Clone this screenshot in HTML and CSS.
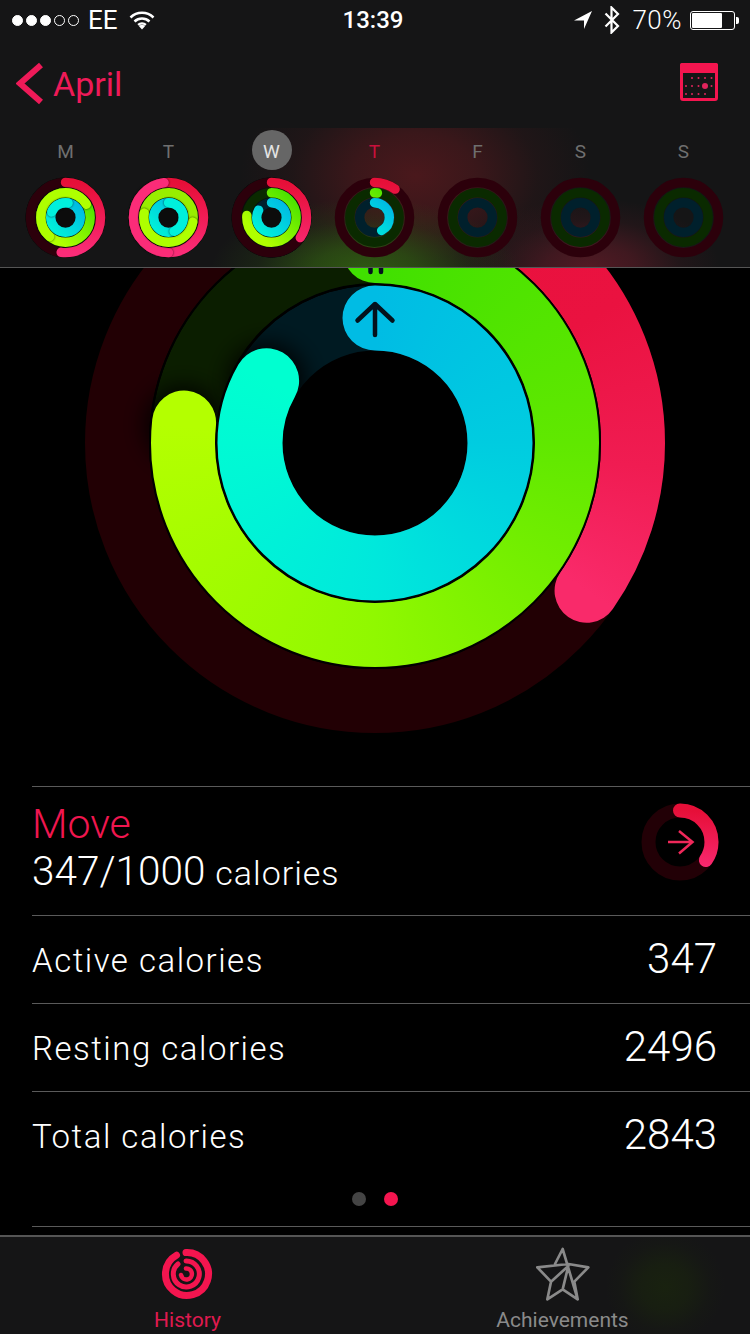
FILE: index.html
```html
<!DOCTYPE html>
<html lang="en">

<head>
    <meta charset="UTF-8">
    <meta name="viewport" content="width=device-width, initial-scale=1.0">
    <title>Activity History</title>
    <link rel="stylesheet" href="styles.css">
</head>

<body>
    <div class="screen">
        <header class="top">
            <div class="status">
                <div class="status-left">
                    <span class="signal">
                        <i class="dot on"></i><i class="dot on"></i><i class="dot on"></i><i class="dot"></i><i class="dot"></i>
                    </span>
                    <span class="carrier">EE</span>
                    <svg class="wifi" width="26" height="20" viewBox="0 0 26 20">
                        <path d="M1.5 7.5a16.5 16.5 0 0 1 23 0" />
                        <path d="M5.5 11.5a11 11 0 0 1 15 0" />
                        <path d="M9.2 15a5.6 5.6 0 0 1 7.6 0" />
                        <path class="wifi-tip" d="M13 19.5l-3-3.3a4.4 4.4 0 0 1 6 0z" />
                    </svg>
                </div>
                <div class="clock">13:39</div>
                <div class="status-right">
                    <svg class="loc" width="18" height="18" viewBox="0 0 18 18">
                        <path d="M0 9.5L18 0l-8 18V9.5z" />
                    </svg>
                    <svg class="bt" width="16" height="28" viewBox="0 0 16 28">
                        <path d="M1.5 7.5L14 20l-6.5 6.5v-25L14 8 1.5 20.5" />
                    </svg>
                    <span class="pct">70%</span>
                    <span class="battery"><span class="battery-fill"></span></span>
                    <span class="battery-nub"></span>
                </div>
            </div>

            <nav class="nav">
                <div class="back">
                    <svg width="28" height="44" viewBox="0 0 28 44">
                        <path d="M25 3L4 21.500 25 40" />
                    </svg>
                    <span>April</span>
                </div>
                <svg class="cal" width="38" height="38" viewBox="0 0 38 38">
                    <rect class="cal-body" x="1.500" y="1.500" width="35" height="35" rx="1.500" />
                    <rect class="cal-band" x="0" y="0" width="38" height="10" rx="2" />
                    <g class="cal-dots">
                        <circle cx="12" cy="15" r="1" /><circle cx="18.500" cy="15" r="1" /><circle cx="25" cy="15" r="1" /><circle cx="31.500" cy="15" r="1" />
                        <circle cx="6" cy="23" r="1" /><circle cx="12" cy="23" r="1" /><circle cx="18.500" cy="23" r="1" /><circle cx="25" cy="23" r="3" /><circle cx="31.500" cy="23" r="1" />
                        <circle cx="6" cy="31" r="1" /><circle cx="12" cy="31" r="1" /><circle cx="18.500" cy="31" r="1" /><circle cx="25" cy="31" r="1" />
                    </g>
                </svg>
            </nav>

            <div class="week">
                <div class="day">
                    <span class="day-name">M</span>
                    <svg class="mini solid" viewBox="-41 -41 82 82">
                        <circle class="track red" r="35.500" />
                        <circle class="track green" r="25" />
                        <circle class="track blue" r="15" />
                        <circle class="arc mini-red" r="35.500" pathLength="100" stroke-dasharray="52 48" stroke-dashoffset="25" />
                        <circle class="arc mini-green" r="25" pathLength="100" stroke-dasharray="100 0" stroke-dashoffset="25" />
                        <circle class="arc lime capped" r="25" pathLength="100" stroke-dasharray="55 45" stroke-dashoffset="64" />
                        <circle class="arc mini-blue" r="15" pathLength="100" stroke-dasharray="100 0" stroke-dashoffset="25" />
                        <circle class="arc mint capped" r="15" pathLength="100" stroke-dasharray="22 78" stroke-dashoffset="44" />
                    </svg>
                </div>
                <div class="day">
                    <span class="day-name">T</span>
                    <svg class="mini solid" viewBox="-41 -41 82 82">
                        <circle class="arc mini-red" r="35.500" pathLength="100" stroke-dasharray="100 0" stroke-dashoffset="25" />
                        <circle class="arc pink capped" r="35.500" pathLength="100" stroke-dasharray="48 52" stroke-dashoffset="-25" />
                        <circle class="arc lime-soft" r="25" pathLength="100" stroke-dasharray="100 0" stroke-dashoffset="25" />
                        <circle class="arc lime capped" r="25" pathLength="100" stroke-dasharray="50 50" stroke-dashoffset="-3" />
                        <circle class="arc mini-blue" r="15" pathLength="100" stroke-dasharray="100 0" stroke-dashoffset="25" />
                        <circle class="arc mint capped" r="15" pathLength="100" stroke-dasharray="44 56" stroke-dashoffset="25" />
                    </svg>
                </div>
                <div class="day">
                    <span class="day-name current">W</span>
                    <svg class="mini solid" viewBox="-41 -41 82 82">
                        <circle class="track red" r="35.500" />
                        <circle class="track green" r="25" />
                        <circle class="track blue" r="15" />
                        <circle class="arc mini-red" r="35.500" pathLength="100" stroke-dasharray="34.700 65.300" stroke-dashoffset="25" />
                        <circle class="arc mini-green" r="25" pathLength="100" stroke-dasharray="76.400 23.600" stroke-dashoffset="25" />
                        <circle class="arc mini-blue" r="15" pathLength="100" stroke-dasharray="83.300 16.700" stroke-dashoffset="25" />
                    </svg>
                </div>
                <div class="day">
                    <span class="day-name today">T</span>
                    <svg class="mini" viewBox="-41 -41 82 82">
                        <circle class="track red" r="35.500" />
                        <circle class="track green" r="25" />
                        <circle class="track blue" r="15" />
                        <circle class="arc mini-red" r="35.500" pathLength="100" stroke-dasharray="10 90" stroke-dashoffset="25" />
                        <circle class="arc mini-green" r="25" pathLength="100" stroke-dasharray="2 98" stroke-dashoffset="25" />
                        <circle class="arc mini-blue" r="15" pathLength="100" stroke-dasharray="42 58" stroke-dashoffset="25" />
                    </svg>
                </div>
                <div class="day">
                    <span class="day-name">F</span>
                    <svg class="mini" viewBox="-41 -41 82 82">
                        <circle class="track red" r="35.500" />
                        <circle class="track green" r="25" />
                        <circle class="track blue" r="15" />
                    </svg>
                </div>
                <div class="day">
                    <span class="day-name">S</span>
                    <svg class="mini" viewBox="-41 -41 82 82">
                        <circle class="track red" r="35.500" />
                        <circle class="track green" r="25" />
                        <circle class="track blue" r="15" />
                    </svg>
                </div>
                <div class="day">
                    <span class="day-name">S</span>
                    <svg class="mini" viewBox="-41 -41 82 82">
                        <circle class="track red" r="35.500" />
                        <circle class="track green" r="25" />
                        <circle class="track blue" r="15" />
                    </svg>
                </div>
            </div>
        </header>

        <main class="content">
            <svg class="rings" width="750" height="600" viewBox="0 0 750 600">
                <defs>
                    <linearGradient id="grad-red" x1="0.700" y1="0" x2="0.600" y2="1">
                        <stop offset="0" stop-color="#e60f38" />
                        <stop offset="1" stop-color="#fb2c78" />
                    </linearGradient>
                    <linearGradient id="grad-green" x1="1" y1="0" x2="0" y2="1">
                        <stop offset="0" stop-color="#3ee000" />
                        <stop offset="0.800" stop-color="#b0ff00" />
                    </linearGradient>
                    <linearGradient id="grad-blue" x1="1" y1="0" x2="0" y2="1">
                        <stop offset="0" stop-color="#00b8e4" />
                        <stop offset="1" stop-color="#00f4d8" />
                    </linearGradient>
                    <filter id="soft" x="-50%" y="-50%" width="200%" height="200%">
                        <feGaussianBlur stdDeviation="12" />
                    </filter>
                    <mask id="mask-red" maskUnits="userSpaceOnUse" x="0" y="0" width="750" height="600">
                        <circle class="arc-mask" cx="375" cy="300" r="258" pathLength="100" stroke-dasharray="34.700 65.300" stroke-dashoffset="25" />
                    </mask>
                    <mask id="mask-green" maskUnits="userSpaceOnUse" x="0" y="0" width="750" height="600">
                        <circle class="arc-mask" cx="375" cy="300" r="192" pathLength="100" stroke-dasharray="76.700 23.300" stroke-dashoffset="25" />
                    </mask>
                    <mask id="mask-blue" maskUnits="userSpaceOnUse" x="0" y="0" width="750" height="600">
                        <circle class="arc-mask blue-width" cx="375" cy="300" r="125" pathLength="100" stroke-dasharray="83.300 16.700" stroke-dashoffset="25" />
                    </mask>
                </defs>

                <circle class="big-track big-red" cx="375" cy="300" r="258" />
                <circle class="big-track big-green" cx="375" cy="300" r="192" />
                <circle class="big-track big-blue blue-width" cx="375" cy="300" r="125" />

                <!-- shade the empty track around the line ends -->
                <circle class="cap-shade" cx="184" cy="282" r="38" filter="url(#soft)" />
                <circle class="cap-shade" cx="267" cy="239" r="38" filter="url(#soft)" />

                <g mask="url(#mask-red)">
                    <foreignObject x="0" y="0" width="750" height="600">
                        <div class="sweep sweep-red"></div>
                    </foreignObject>
                </g>
                <circle class="gap" cx="375" cy="300" r="225" />
                <g mask="url(#mask-green)">
                    <foreignObject x="0" y="0" width="750" height="600">
                        <div class="sweep sweep-green"></div>
                    </foreignObject>
                </g>
                <circle class="gap" cx="375" cy="300" r="158.500" />
                <g mask="url(#mask-blue)">
                    <foreignObject x="0" y="0" width="750" height="600">
                        <div class="sweep sweep-blue"></div>
                    </foreignObject>
                </g>

                <path class="ring-arrow" d="M375 161v31M357.500 177.500L375 161l17.500 16.500" />
                <path class="ring-arrow" d="M370.500 112v17M381 112v17" />
            </svg>

            <section class="stats">
                <div class="row move-row">
                    <div>
                        <div class="move-title">Move</div>
                        <div class="move-value">347/1000 <small>calories</small></div>
                    </div>
                    <svg class="move-ring" width="78" height="78" viewBox="-39 -39 78 78">
                        <circle class="move-track" r="31.500" />
                        <circle class="arc mini-red move-arc" r="31.500" pathLength="100" stroke-dasharray="34.700 65.300" stroke-dashoffset="25" />
                        <path class="move-arrow" d="M-12 0H12.500M-1 -11L12.500 0-1 11.500" />
                    </svg>
                </div>
                <div class="row">
                    <span class="label">Active calories</span>
                    <span class="value">347</span>
                </div>
                <div class="row">
                    <span class="label">Resting calories</span>
                    <span class="value">2496</span>
                </div>
                <div class="row">
                    <span class="label">Total calories</span>
                    <span class="value">2843</span>
                </div>
                <div class="pager">
                    <i class="page"></i>
                    <i class="page active"></i>
                </div>
            </section>
        </main>

        <footer class="tabs">
            <div class="tab active">
                <svg width="54" height="54" viewBox="-27 -27 54 54">
                    <path d="M-1 -21.500A21.500 21.500 0 1 1 -10.500 -18.800" stroke-width="7" />
                    <path d="M-1 -13A13 13 0 1 1 -9 -10" stroke-width="5" />
                    <path d="M-1 -5.500A5.500 5.500 0 1 1 -6 1" stroke-width="4.500" />
                </svg>
                <span>History</span>
            </div>
            <div class="tab">
                <svg class="star" width="75" height="70" viewBox="0 0 225 210">
                    <path d="M113 27L158 178M113 27L90 72M37 82L130 72 190 82M37 82L78 125 67 178 113 148 158 178 148 125 190 82M78 125L130 78 113 148" />
                </svg>
                <span>Achievements</span>
            </div>
        </footer>
    </div>
</body>

</html>
```

FILE: styles.css
```css
* {
    box-sizing: border-box;
}

body {
    margin: 0;
    background: #000;
    font-family: Roboto, "Liberation Sans", sans-serif;
    color: #fff;
}

.screen {
    position: relative;
    width: 750px;
    height: 1334px;
    overflow: hidden;
    background: #000;
}

/* top bar lies over the big rings */
.top {
    position: absolute;
    top: 0;
    left: 0;
    width: 750px;
    background: #151516;
    z-index: 2;
}

.status {
    display: flex;
    align-items: center;
    justify-content: space-between;
    height: 40px;
    padding: 0 11px 0 12px;
    font-size: 26px;
}

.status-left,
.status-right {
    display: flex;
    align-items: center;
}

.status-left {
    width: 297px;
}

.status-right {
    width: 302px;
    justify-content: flex-end;
}

.signal {
    display: flex;
    gap: 3px;
}

.dot {
    display: block;
    width: 11px;
    height: 11px;
    border: 1px solid #fff;
    border-radius: 50%;
}

.dot.on {
    background: #fff;
}

.carrier {
    margin-left: 9px;
}

.wifi {
    margin-left: 11px;
    fill: none;
    stroke: #fff;
    stroke-width: 2.500;
}

.wifi-tip {
    fill: #fff;
    stroke: none;
}

.clock {
    font-size: 24px;
    font-weight: 500;
}

.loc {
    fill: #fff;
    margin-right: 12px;
}

.bt {
    fill: none;
    stroke: #fff;
    stroke-width: 2.200;
    margin-right: 12px;
}

.pct {
    font-weight: 300;
    letter-spacing: 0.500px;
    margin-right: 8px;
}

.battery {
    display: block;
    width: 45px;
    height: 19px;
    border: 1px solid #fff;
    border-radius: 3px;
    padding: 1px;
}

.battery-fill {
    display: block;
    width: 30px;
    height: 15px;
    background: #fff;
    border-radius: 1px;
}

.battery-nub {
    display: block;
    width: 3px;
    height: 7px;
    margin-left: 1px;
    background: #fff;
    border-radius: 0 2px 2px 0;
}

.nav {
    display: flex;
    align-items: center;
    justify-content: space-between;
    height: 88px;
    padding: 0 32px 0 16px;
}

.back {
    display: flex;
    align-items: center;
    gap: 9px;
    color: #ee1a58;
    font-size: 34px;
}

.back svg {
    fill: none;
    stroke: #ee1a58;
    stroke-width: 6;
}

.cal {
    margin-bottom: 4px;
}

.cal-body {
    fill: #151516;
    stroke: #f4154f;
    stroke-width: 3;
}

.cal-band {
    fill: #f4154f;
}

.cal-dots {
    fill: #e0245c;
}

.week {
    display: grid;
    grid-template-columns: repeat(7, 103px);
    height: 140px;
    padding: 2px 14px 0;
    border-bottom: 1px solid #555;
    background:
        radial-gradient(ellipse 155px 75px at 365px 145px, rgba(47, 90, 18, 1) 0, rgba(47, 90, 18, 0.7) 35%, rgba(47, 90, 18, 0.2) 70%, rgba(47, 90, 18, 0) 100%),
        radial-gradient(ellipse 130px 70px at 590px 140px, rgba(82, 26, 36, 1) 0, rgba(82, 26, 36, 0.7) 35%, rgba(82, 26, 36, 0.2) 70%, rgba(82, 26, 36, 0) 100%),
        radial-gradient(ellipse 175px 120px at 415px 48px, rgba(74, 24, 28, 1) 0, rgba(74, 24, 28, 0.7) 35%, rgba(74, 24, 28, 0.2) 70%, rgba(74, 24, 28, 0) 100%),
        #151516;
}

.day {
    display: flex;
    flex-direction: column;
    align-items: center;
    gap: 7px;
}

.day-name {
    display: flex;
    align-items: center;
    justify-content: center;
    width: 40px;
    height: 40px;
    padding-top: 2px;
    border-radius: 50%;
    font-size: 19px;
    color: #6f6f6f;
}

.day-name.current {
    background: #666;
    color: #e4e4e4;
}

.day-name.today {
    color: #c8103c;
}

.mini {
    width: 81px;
    height: 81px;
}

.mini.solid {
    background: radial-gradient(circle, #0c0c0c 0, #0c0c0c 40px, transparent 40.500px);
}

.mini circle {
    fill: none;
    stroke-width: 9.500;
}

.track.red {
    stroke: #2c000b;
}

.track.green {
    stroke: #0a2a00;
}

.track.blue {
    stroke: #00202c;
}

.arc {
    fill: none;
    stroke-linecap: round;
}

.mini-red {
    stroke: url(#grad-red);
}

.mini-green {
    stroke: url(#grad-green);
}

.mini-blue {
    stroke: url(#grad-blue);
}

.lime {
    stroke: #aeff00;
}

.lime-soft {
    stroke: #98ee00;
}

.mint {
    stroke: #00f0dc;
}

.pink {
    stroke: #fb2c78;
}

.capped {
    filter: drop-shadow(0 0 1px rgba(0, 0, 0, 0.7));
}

.content {
    padding-top: 143px;
}

.rings {
    display: block;
}

.big-track {
    fill: none;
    stroke-width: 64px;
}

.big-red {
    stroke: #220004;
}

.big-green {
    stroke: #0b1e00;
}

.big-blue {
    stroke: #001a22;
}

.cap-shade {
    fill: #000;
}

.arc-mask {
    fill: none;
    stroke: #fff;
    stroke-width: 64px;
    stroke-linecap: round;
}

.blue-width {
    stroke-width: 65px;
}

.gap {
    fill: none;
    stroke: #000;
    stroke-width: 2px;
}

.sweep {
    width: 750px;
    height: 600px;
}

.sweep-red {
    background: conic-gradient(from 0deg at 375px 300px, #e8103a 0deg, #ea1240 60deg, #f01c52 95deg, #f92a6a 125deg, #f92a6a 300deg, #e8103a 300deg);
}

.sweep-green {
    background: conic-gradient(from 0deg at 375px 300px, #40e000 0deg, #60e800 90deg, #90f800 180deg, #b4ff00 275deg, #b4ff00 315deg, #40e000 315deg);
}

.sweep-blue {
    background: conic-gradient(from 0deg at 375px 300px, #00bce4 0deg, #00cce0 90deg, #00e8dc 180deg, #00fad4 270deg, #00ffd0 300deg, #00ffd0 325deg, #00bce4 325deg);
}

.ring-arrow {
    fill: none;
    stroke: #04121c;
    stroke-width: 4.500px;
    stroke-linecap: round;
    stroke-linejoin: round;
}

.stats {
    margin: 43px 0 0 32px;
    font-weight: 300;
}

.row {
    display: flex;
    align-items: center;
    justify-content: space-between;
    height: 88px;
    padding-right: 33px;
    border-top: 1px solid #5a5a5a;
}

.move-row {
    height: 129px;
    padding-right: 31px;
    padding-bottom: 5px;
}

.move-ring {
    margin-bottom: 14px;
}

.move-title {
    font-size: 41px;
    line-height: 47px;
    color: #f0164f;
}

.move-value {
    font-size: 40.500px;
    line-height: 47px;
}

.move-value small {
    font-size: 34px;
    letter-spacing: 1px;
}

.move-track {
    fill: none;
    stroke: #220006;
    stroke-width: 14px;
}

.move-arc {
    stroke-width: 14px;
}

.move-arrow {
    fill: none;
    stroke: #f0285a;
    stroke-width: 2.500px;
}

.label {
    font-size: 33px;
    letter-spacing: 1.500px;
    padding-top: 2px;
}

.value {
    font-size: 42px;
    padding-bottom: 3px;
}

.pager {
    display: flex;
    justify-content: center;
    gap: 18px;
    height: 48px;
    padding: 13px 32px 0 0;
    border-bottom: 1px solid #5a5a5a;
}

.page {
    display: block;
    width: 14px;
    height: 14px;
    border-radius: 50%;
    background: #444;
}

.page.active {
    background: #f4154f;
}

.tabs {
    position: absolute;
    top: 1235px;
    left: 0;
    display: grid;
    grid-template-columns: 1fr 1fr;
    width: 750px;
    height: 99px;
    border-top: 2px solid #555;
    background:
        radial-gradient(ellipse 60px 58px at 665px 50px, rgba(28, 44, 10, 0.55) 0, rgba(28, 44, 10, 0.4) 40%, rgba(28, 44, 10, 0.1) 75%, rgba(28, 44, 10, 0) 100%),
        #151516;
}

.tab {
    position: relative;
    display: flex;
    flex-direction: column;
    align-items: center;
    font-size: 21px;
    color: #8a8a8a;
}

.tab svg {
    margin: 10px 0 7px;
}

.tab.active {
    color: #e01a50;
}

.tab.active svg {
    margin-left: -1px;
}

.tab.active path {
    fill: none;
    stroke: #f4154f;
    stroke-linecap: round;
}

.tab .star {
    height: 70px;
    margin: 3px 0 -2px;
    fill: none;
    stroke: #8a8a8a;
    stroke-width: 8;
    stroke-linejoin: round;
    stroke-linecap: round;
}
```
